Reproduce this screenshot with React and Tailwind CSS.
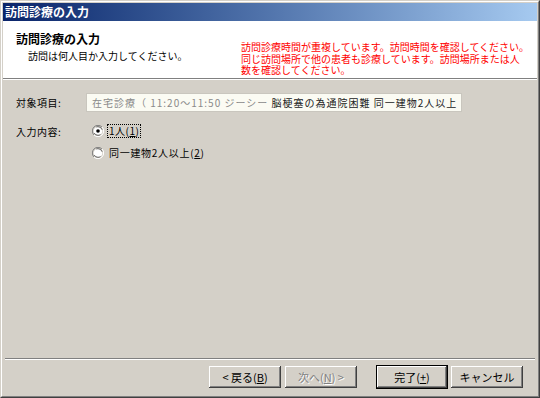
import React from 'react';

const btn =
  'h-[22px] w-[72px] bg-[#d4d0c8] text-[11px] flex items-center justify-center shadow-[inset_-1px_-1px_#404040,inset_1px_1px_#ffffff,inset_-2px_-2px_#808080,inset_2px_2px_#d4d0c8]';

const Radio = ({ checked }) => (
  <svg width="12" height="12" viewBox="0 0 12 12" className="shrink-0">
    <path d="M10 2A5.5 5.5 0 0 0 2 10" fill="none" stroke="#808080" strokeWidth="1" />
    <path d="M2 10A5.5 5.5 0 0 0 10 2" fill="none" stroke="#ffffff" strokeWidth="1" />
    <circle cx="6" cy="6" r="4.3" fill="#ffffff" stroke="#404040" strokeWidth="0.8" strokeDasharray="7 7" strokeDashoffset="-4" />
    {checked && <circle cx="6" cy="6" r="1.8" fill="#000000" />}
  </svg>
);

const App = () => {
  return (
    <div
      className="w-[540px] h-[398px] border border-t-[#d4d0c8] border-l-[#d4d0c8] border-r-[#404040] border-b-[#404040] bg-[#d4d0c8] text-black"
      style={{ fontFamily: '"Noto Sans CJK JP", "Liberation Sans", sans-serif' }}
    >
      <div className="h-full border border-t-white border-l-white border-r-[#808080] border-b-[#808080] p-px flex flex-col">
        {/* Title bar */}
        <div className="h-[18px] bg-gradient-to-r from-[#0a246a] to-[#a6caf0] flex items-center pl-[2px]">
          <span className="text-[12px] leading-none font-bold text-white">訪問診療の入力</span>
        </div>

        {/* Header */}
        <div className="h-[57px] bg-white flex">
          <div className="w-[238px] pl-[13px] pt-[11px]">
            <div className="text-[12px] leading-[14px] font-bold">訪問診療の入力</div>
            <div className="pl-[12px] pt-[4px] text-[10px] leading-[12px]">訪問は何人目か入力してください。</div>
          </div>
          <div className="pt-[20px] text-[10px] leading-[11.5px] text-[#ff0000] whitespace-nowrap">
            訪問診療時間が重複しています。訪問時間を確認してください。
            <br />
            同じ訪問場所で他の患者も診療しています。訪問場所または人
            <br />
            数を確認してください。
          </div>
        </div>
        <div className="h-px bg-[#808080]" />
        <div className="h-px bg-white" />

        {/* Body */}
        <div className="flex-1 flex flex-col">
          <div className="pl-[13px] pt-[13px] flex items-center">
            <span className="w-[70px] text-[10px] tracking-[0.5px]">対象項目:</span>
            <div className="w-[376px] h-[19px] bg-[#fbfbf3] border border-[#c9c6be] flex items-center pl-[5px] text-[10px] tracking-[1px] whitespace-nowrap overflow-hidden">
              <span className="text-[#8a8a8a]">在宅診療（&nbsp;11:20〜11:50&nbsp;ジーシー&nbsp;</span>
              <span className="text-[#222]">脳梗塞の為通院困難&nbsp;同一建物2人以上</span>
            </div>
          </div>

          <div className="pl-[13px] pt-[12px] flex">
            <span className="w-[76px] text-[10px] leading-[14px] pt-[1px] tracking-[0.5px]">入力内容:</span>
            <div className="flex flex-col gap-[8px]">
              <div className="flex items-center gap-[3px] h-[14px]">
                <Radio checked />
                <span className="text-[10px] leading-[12px] px-px border border-dotted border-black tracking-[0.5px]">1人(<u>1</u>)</span>
              </div>
              <div className="flex items-center gap-[4px] h-[14px]">
                <Radio />
                <span className="text-[10px] leading-[12px] px-px tracking-[0.7px]">同一建物2人以上(<u>2</u>)</span>
              </div>
            </div>
          </div>

          <div className="flex-1" />

          <div className="h-px bg-[#808080] mx-[2px]" />
          <div className="h-px bg-white mx-[2px]" />

          <div className="flex items-center pt-[5px] pb-[6px] pl-[206px]">
            <div className={`${btn} text-black`}>&lt; 戻る(<u>B</u>)</div>
            <div className={`${btn} ml-[4px] text-[#808080] [text-shadow:1px_1px_0_#ffffff]`}>次へ(<u>N</u>) &gt;</div>
            <div className="ml-[19px] border border-black">
              <div className="h-[22px] w-[70px] bg-[#d4d0c8] text-[11px] text-black flex items-center justify-center shadow-[inset_-1px_-1px_#404040,inset_1px_1px_#ffffff,inset_-2px_-2px_#808080,inset_2px_2px_#d4d0c8]">
                完了(<u>+</u>)
              </div>
            </div>
            <div className={`${btn} ml-[3px] text-black`}>キャンセル</div>
          </div>
        </div>
      </div>
    </div>
  );
};

export default App;
